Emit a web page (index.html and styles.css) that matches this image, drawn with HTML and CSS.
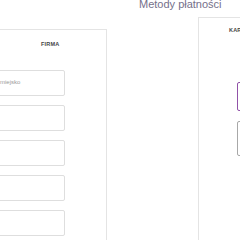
FILE: index.html
```html
<!DOCTYPE html>
<html lang="pl">
<head>
    <meta charset="UTF-8">
    <meta name="viewport" content="width=device-width, initial-scale=1.0">
    <title>Metody płatności</title>
    <link rel="stylesheet" href="styles.css">
</head>
<body>
    <div class="page">
        <h2 class="page-title">Metody płatności</h2>

        <div class="cards">
            <div class="card card-company">
                <h3 class="card-title">FIRMA</h3>
                <div class="field"><input type="text" placeholder="Nazwa miejsko"></div>
                <div class="field"><input type="text"></div>
                <div class="field"><input type="text"></div>
                <div class="field"><input type="text"></div>
                <div class="field"><input type="text"></div>
            </div>

            <div class="card card-payment">
                <h3 class="card-title">KARTA</h3>
                <div class="option option-active"></div>
                <div class="option"></div>
            </div>
        </div>
    </div>
</body>
</html>
```

FILE: styles.css
```css
body {
    font-family: "Liberation Sans", Arial, sans-serif;
    margin: 0;
    padding: 0;
    background-color: #fff;
    overflow: hidden;
}

.page {
    margin-left: -40px;
    width: 520px;
}

.page-title {
    margin: -2px 0 0;
    padding-left: 179px;
    font-size: 11px;
    line-height: 12px;
    font-weight: normal;
    color: #75708a;
}

.cards {
    display: flex;
    align-items: flex-start;
    gap: 91px;
}

.card {
    flex-shrink: 0;
    background-color: #fff;
    border: 1px solid #e4e4e4;
    min-height: 260px;
    box-sizing: border-box;
}

.card-title {
    margin: 0;
    font-size: 5.5px;
    font-weight: bold;
    color: #444;
    letter-spacing: 0.2px;
}

/* firma */
.card-company {
    margin-top: 19px;
    padding: 0 41px 0 10px;
    width: 147px;
}

.card-company .card-title {
    padding: 10px 0 0 70px;
    line-height: 8px;
    margin-bottom: 22px;
}

.field {
    margin-bottom: 9px;
}

.field input {
    display: block;
    width: 100%;
    height: 26px;
    box-sizing: border-box;
    padding: 0 0 3px 8px;
    border: 1px solid #dedede;
    border-radius: 2px;
    font-family: inherit;
    font-size: 6px;
    color: #555;
}

.field input::placeholder {
    color: #9a9a9a;
}

/* platnosc */
.card-payment {
    width: 240px;
    margin-top: 7px;
    padding: 0 0 0 38px;
}

.card-payment .card-title {
    padding: 8px 0 0 0;
    margin-left: -8px;
    line-height: 8px;
    margin-bottom: 48px;
}

.option {
    width: 60px;
    height: 33px;
    border: 1px solid #a8a8a8;
    border-radius: 2px;
    margin-bottom: 10px;
}

.option-active {
    height: 27px;
    border-color: #9152a8;
}
```
